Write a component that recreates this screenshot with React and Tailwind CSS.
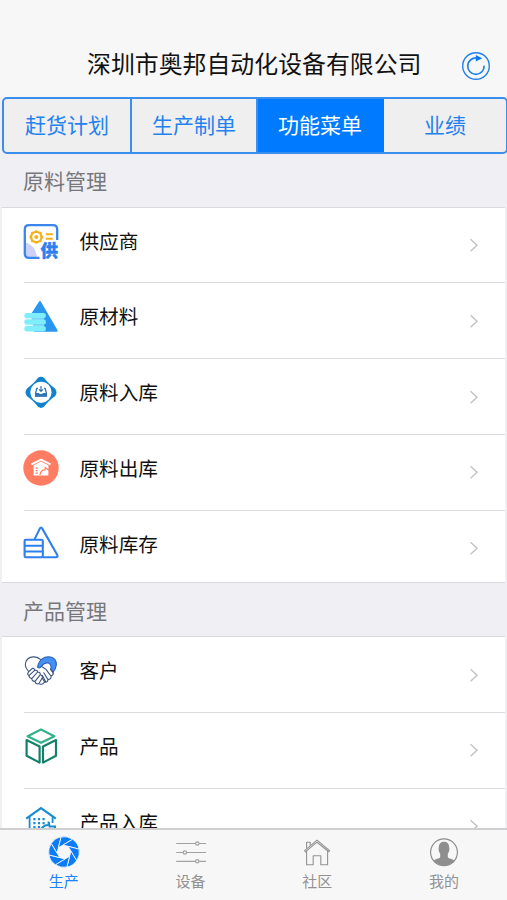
import { useState } from 'react';

function SupplierIcon() {
  return (
    <svg viewBox="0 0 40 40" className="size-10">
      <path d="M4 20 C10 23 15 25 16 36 H7 Q4 36 4 32 Z" fill="#cdd0f8" />
      <path
        d="M36.2 18 V7.5 Q36.2 3.2 32 3.2 H8 Q3.8 3.2 3.8 7.5 V31.5 Q3.8 35.8 8 35.8 H18.5"
        fill="none"
        stroke="#3b86ee"
        strokeWidth="2.3"
      />
      <path
        d="M15.3 8 L17.8 9.4 L20.4 9.9 L20.9 12.5 L22.5 15 L20.9 17.5 L20.4 20.1 L17.8 20.6 L15.3 22 L12.8 20.6 L10.2 20.1 L9.7 17.5 L8.1 15 L9.7 12.5 L10.2 9.9 L12.8 9.4 Z"
        fill="#f6b01e"
      />
      <circle cx="15.3" cy="15" r="4" fill="#fff" />
      <circle cx="15.3" cy="15" r="2" fill="#f6b01e" />
      <path d="M24.7 12.2 H31.8 M24.7 16.8 H31.8" stroke="#f6b01e" strokeWidth="2" />
      <text
        x="19.6"
        y="35"
        fontSize="17.5"
        fontWeight="900"
        fill="#2f7eee"
        stroke="#2f7eee"
        strokeWidth="0.4"
        fontFamily="'Noto Sans CJK SC', sans-serif"
      >
        供
      </text>
    </svg>
  );
}

function MaterialIcon() {
  return (
    <svg viewBox="0 0 40 40" className="size-10">
      <path
        d="M19 5.2 L35.6 33.7 H14 L11 17.5 Z"
        fill="#2a97ee"
        stroke="#2a97ee"
        strokeWidth="2.2"
        strokeLinejoin="round"
      />
      <path
        d="M6 18.6 H22.2 M6 25 H22.2 M6 31.7 H22.2"
        stroke="#7eeefb"
        strokeWidth="5.4"
        strokeLinecap="round"
      />
      <path d="M4 21.8 H23 M4 28.4 H23" stroke="#c9f8fd" strokeWidth="0.7" />
    </svg>
  );
}

function MaterialInIcon() {
  return (
    <svg viewBox="0 0 40 40" className="size-10">
      <path
        d="M17 4.8 Q20 2.6 23 4.8 C26 9.2 29.8 12.4 34 15.4 Q37 19.3 34 23.2 C29.8 26.2 26 29.4 23 33.8 Q20 36 17 33.8 C14 29.4 10.2 26.2 6 23.2 Q3 19.3 6 15.4 C10.2 12.4 14 9.2 17 4.8 Z"
        fill="#0f82d0"
      />
      <circle cx="20" cy="19.3" r="10.6" fill="#fff" />
      <path
        d="M17 15.4 H15.8 L14.6 20.2 V23.2 H25.4 V20.2 L24.2 15.4 H23"
        fill="none"
        stroke="#2f74b8"
        strokeWidth="1.3"
      />
      <path d="M14.4 20 H17.6 Q20 22 22.4 20 H25.6 V23.6 H14.4 Z" fill="#2f74b8" />
      <path d="M20 13 V18 M18 16.4 L20 18.4 L22 16.4" fill="none" stroke="#2f74b8" strokeWidth="1.2" />
    </svg>
  );
}

function MaterialOutIcon() {
  return (
    <svg viewBox="0 0 40 40" className="size-10">
      <circle cx="20" cy="19" r="17.7" fill="#fe7c62" />
      <path
        d="M10.4 15.4 L20 10.6 L29.6 15.4"
        fill="none"
        stroke="#fff"
        strokeWidth="2"
        strokeLinejoin="round"
      />
      <path d="M12.6 16.2 L20 12.6 L27.4 16.2 V26.6 H12.6 Z" fill="#fff" />
      <path d="M14.6 19.1 H16.8 M14.6 21.6 H16.8 M14.6 24.1 H16.8" stroke="#fe7c62" strokeWidth="1.2" />
      <path
        d="M19 26 C19.4 22.4 21.4 20.8 24.2 20.8 V18.6 L28.4 21.6"
        fill="none"
        stroke="#fe7c62"
        strokeWidth="1.2"
      />
    </svg>
  );
}

function MaterialStockIcon() {
  return (
    <svg
      viewBox="0 0 40 40"
      className="size-10"
      fill="none"
      stroke="#2e80ee"
      strokeWidth="2.1"
      strokeLinejoin="round"
    >
      <path d="M13.4 14.6 L18.8 3.6 Q20 1.4 21.3 3.6 L36.3 30 Q37.2 32.2 35 32.2 H21.6" />
      <rect x="3.6" y="14.8" width="18.2" height="17.4" rx="1.2" />
      <path d="M3.6 20.7 H21.8 M3.6 26.5 H21.8" />
    </svg>
  );
}

function CustomerIcon() {
  return (
    <svg
      viewBox="0 0 40 40"
      className="size-10"
      fill="none"
      stroke="#3c5482"
      strokeWidth="1.1"
      strokeLinecap="round"
      strokeLinejoin="round"
    >
      <path d="M7.4 20.2 C3.6 16.6 3.2 11.4 6.6 8 C10.2 4.8 16 5.4 19.8 8.6" />
      <path
        d="M16.6 16.4 C17 13 19 9.4 21.4 7.6 C25 5 31 5 33.8 8.4 C36.6 12.2 35.4 17 32 21.4 L29.6 18.4 C30.6 15.6 29.8 13 27.4 12 C24.4 11.4 22.4 12.6 20.6 15.2 C19.4 16.8 17.8 17.2 16.6 16.4 Z"
        fill="#4490f5"
        stroke="#2c62b4"
      />
      <path
        d="M7.4 21 L11.4 17.4 Q13.8 17.2 13.6 19.4 L8 24.6 Q5.8 23.4 7.4 21 Z M13.6 19.4 Q16.6 18.6 16.6 21 L10.8 27.6 Q7.8 27 8 24.6 M16.6 21 Q19.6 21 19.2 23.8 L14 30.4 Q10.8 30.4 10.8 27.6 M19.2 23.8 Q22 24.4 21.2 27 L17.8 32.8 Q14.4 33.4 14 30.4"
        fill="#fff"
      />
      <path d="M21.2 27 L23.6 31 Q21.6 34 18.8 33 M23.6 31 Q26.8 31.8 27 28.6 L22.8 21.8 M27 28.6 Q30.4 28.4 30 25.2 L25.2 18.6 M30 25.2 Q33 23.8 32 21.4 L29.4 18 M20.6 15.4 L24.4 18 M24.6 30.4 L21.4 24.4" />
    </svg>
  );
}

function ProductIcon() {
  return (
    <svg
      viewBox="0 0 40 40"
      className="size-10"
      fill="none"
      strokeWidth="2.2"
      strokeLinejoin="round"
    >
      <path d="M20 2.6 L33.4 9.2 L20 15.8 L6.6 9.2 Z" stroke="#31b28d" />
      <path d="M5.6 13 L18.6 19.4 V35.6 L5.6 28.8 Z" stroke="#15806a" />
      <path d="M35 13 L22 19.4 V35.6 L35 28.8 Z" stroke="#15806a" />
    </svg>
  );
}

function ProductInIcon() {
  return (
    <svg viewBox="0 0 40 40" className="size-10" fill="none" stroke="#1a8cd2" strokeWidth="1.8">
      <path d="M5.2 15.6 L20 5 L34.8 15.6" strokeWidth="2.2" />
      <path d="M8.6 13.7 V32 M31.6 13.7 V20" />
      <path
        d="M12.3 16.2 H14.5 M16.9 16.2 H19.1 M21.5 16.2 H23.7 M12.3 20.2 H14.5 M16.9 20.2 H19.1 M21.5 20.2 H23.7 M12.3 24.2 H14.5 M16.9 24.2 H19.1"
        strokeWidth="2.3"
      />
      <path d="M19.6 27 C22 22.6 24.6 21.8 27.6 22 V18.6 L28.6 23.6 H34 V30" strokeWidth="2" />
    </svg>
  );
}

function RefreshIcon() {
  return (
    <svg viewBox="0 0 30 30" className="size-[30px]" fill="none" stroke="#2080ec" strokeWidth="1.4">
      <circle cx="15" cy="15" r="13.3" />
      <path d="M16 7 A8.2 8.2 0 1 0 23.1 14.6" strokeWidth="1.7" />
      <path d="M14.8 4 L21.2 7.2 L14.8 10.6 Z" fill="#0a78f5" stroke="none" />
    </svg>
  );
}

function ApertureIcon() {
  const blades = [-8, 37, 82, 127, 172, 217, 262, 307];
  return (
    <svg viewBox="-16 -16 32 32" className="size-8">
      {blades.map((angle) => (
        <path
          key={angle}
          d="M7 0 L11.4 10.3 A15.4 15.4 0 0 1 0.8 15.4 Z"
          fill="#0a7cfb"
          stroke="#f7f7f7"
          strokeWidth="0.8"
          transform={`rotate(${angle})`}
        />
      ))}
    </svg>
  );
}

function SlidersIcon() {
  return (
    <svg viewBox="0 0 32 32" className="size-8" fill="none" stroke="#a2a2a2" strokeWidth="1.2">
      <path d="M1.2 7.5 H20.4 M24.2 7.5 H31 M1.2 16.5 H8 M11.8 16.5 H31 M1.2 25.3 H20.4 M24.2 25.3 H31" />
      <circle cx="22.3" cy="7.5" r="1.7" />
      <circle cx="9.9" cy="16.5" r="1.7" />
      <circle cx="22.3" cy="25.3" r="1.7" />
    </svg>
  );
}

function HomeIcon() {
  return (
    <svg
      viewBox="0 0 32 32"
      className="size-8"
      fill="none"
      stroke="#929292"
      strokeWidth="1.1"
      strokeLinejoin="round"
    >
      <path d="M3.6 14.6 L16 4.2 L28.6 14.6 L27.8 15.8 L16 6.2 L4.4 15.8 Z" />
      <path d="M5.6 15 V28.8 H12.2 V19.8 H19.8 V28.8 H26.6 V15" />
      <path d="M5.6 12.6 V6.2 H9.2 V9.6" />
    </svg>
  );
}

function ProfileIcon() {
  return (
    <svg viewBox="0 0 32 32" className="size-8">
      <circle cx="16" cy="16.3" r="13.4" fill="none" stroke="#8e8e8e" strokeWidth="1.2" />
      <path
        d="M10.8 11.6 C10.8 7.6 13 5.8 16 5.8 C19 5.8 21.2 7.6 21.2 11.6 C21.8 13.6 21 16.2 19.8 17.8 V21 C20.8 23 24.6 22.6 26.2 24.8 A13.4 13.4 0 0 1 5.8 24.8 C7.4 22.6 11.2 23 12.2 21 V17.8 C11 16.2 10.2 13.6 10.8 11.6 Z"
        fill="#8e8e8e"
      />
    </svg>
  );
}

function Chevron() {
  return (
    <svg viewBox="0 0 10 14" className="mt-[5px] h-3.5 w-2.5" fill="none" stroke="#c4c4c6" strokeWidth="1.5">
      <path d="M1.6 1.2 L8 7.2 L1.6 13.2" />
    </svg>
  );
}

const segments = ['赶货计划', '生产制单', '功能菜单', '业绩'];

const sections = [
  {
    title: '原料管理',
    items: [
      { label: '供应商', Icon: SupplierIcon },
      { label: '原材料', Icon: MaterialIcon },
      { label: '原料入库', Icon: MaterialInIcon },
      { label: '原料出库', Icon: MaterialOutIcon },
      { label: '原料库存', Icon: MaterialStockIcon },
    ],
  },
  {
    title: '产品管理',
    items: [
      { label: '客户', Icon: CustomerIcon },
      { label: '产品', Icon: ProductIcon },
      { label: '产品入库', Icon: ProductInIcon },
    ],
  },
];

const navItems = [
  { label: '生产', Icon: ApertureIcon },
  { label: '设备', Icon: SlidersIcon },
  { label: '社区', Icon: HomeIcon },
  { label: '我的', Icon: ProfileIcon },
];

function MenuRow({ item }) {
  const { label, Icon } = item;
  return (
    <li className="group h-[75.8px] pl-[19px] last:h-[71px]">
      <button className="flex h-[74.8px] w-full items-start pt-[14px] text-left group-last:h-[71px]">
        <Icon />
        <span className="-mt-px ml-[18.5px] flex-1 text-[19.6px] leading-10 text-[#111]">{label}</span>
        <span className="mr-[26px] flex h-[42px] items-center">
          <Chevron />
        </span>
      </button>
      <div className="ml-[3px] h-px bg-[#dcdcde] group-last:hidden" />
    </li>
  );
}

export default function App() {
  const [segment, setSegment] = useState(2);
  const [tab, setTab] = useState(0);

  return (
    <div className="flex h-[900px] w-[507px] flex-col overflow-hidden bg-[#efeff4] font-['Noto_Sans_CJK_SC',sans-serif]">
      <header className="flex h-[97px] shrink-0 items-start bg-[#f7f7f7] pt-[45px] pl-[87px]">
        <h1 className="w-[374px] text-[23.9px] leading-9 whitespace-nowrap text-[#111]">
          深圳市奥邦自动化设备有限公司
        </h1>
        <button className="mt-[6px]">
          <RefreshIcon />
        </button>
      </header>

      <div className="ml-[2px] grid h-[57px] w-[506px] shrink-0 grid-cols-[128px_126px_126px_1fr] overflow-hidden rounded-[5px] border-2 border-[#3a8eee] bg-[#efefef]">
        {segments.map((label, i) => (
          <button
            key={label}
            onClick={() => setSegment(i)}
            className={`border-[#3a8eee] pb-[2px] text-[21px] not-last:border-r-2 ${
              segment === i ? 'border-[#007aff] bg-[#007aff] text-white' : 'text-[#2382f0]'
            }`}
          >
            {label}
          </button>
        ))}
      </div>

      <main className="min-h-0 flex-1 overflow-hidden">
        {sections.map((section, i) => (
          <section key={section.title}>
            <h2
              className={`pl-[23px] text-[21px] text-[#77777b] ${
                i === 0 ? 'h-[52.5px] leading-[52px]' : 'h-[53.5px] leading-[54px]'
              }`}
            >
              {section.title}
            </h2>
            <ul className="mr-[2px] ml-[2px] border-y border-[#d9d9dd] bg-white">
              {section.items.map((item) => (
                <MenuRow key={item.label} item={item} />
              ))}
            </ul>
          </section>
        ))}
      </main>

      <nav className="grid h-[72px] shrink-0 grid-cols-4 border-t-2 border-[#cfcfcf] bg-[#f7f7f7]">
        {navItems.map(({ label, Icon }, i) => (
          <button
            key={label}
            onClick={() => setTab(i)}
            className={`flex flex-col items-center pt-[6px] pl-px text-[15px] ${
              tab === i ? 'text-[#1a83f8]' : 'text-[#929292]'
            }`}
          >
            <Icon />
            <span className="mt-[3px] leading-5">{label}</span>
          </button>
        ))}
      </nav>
    </div>
  );
}
